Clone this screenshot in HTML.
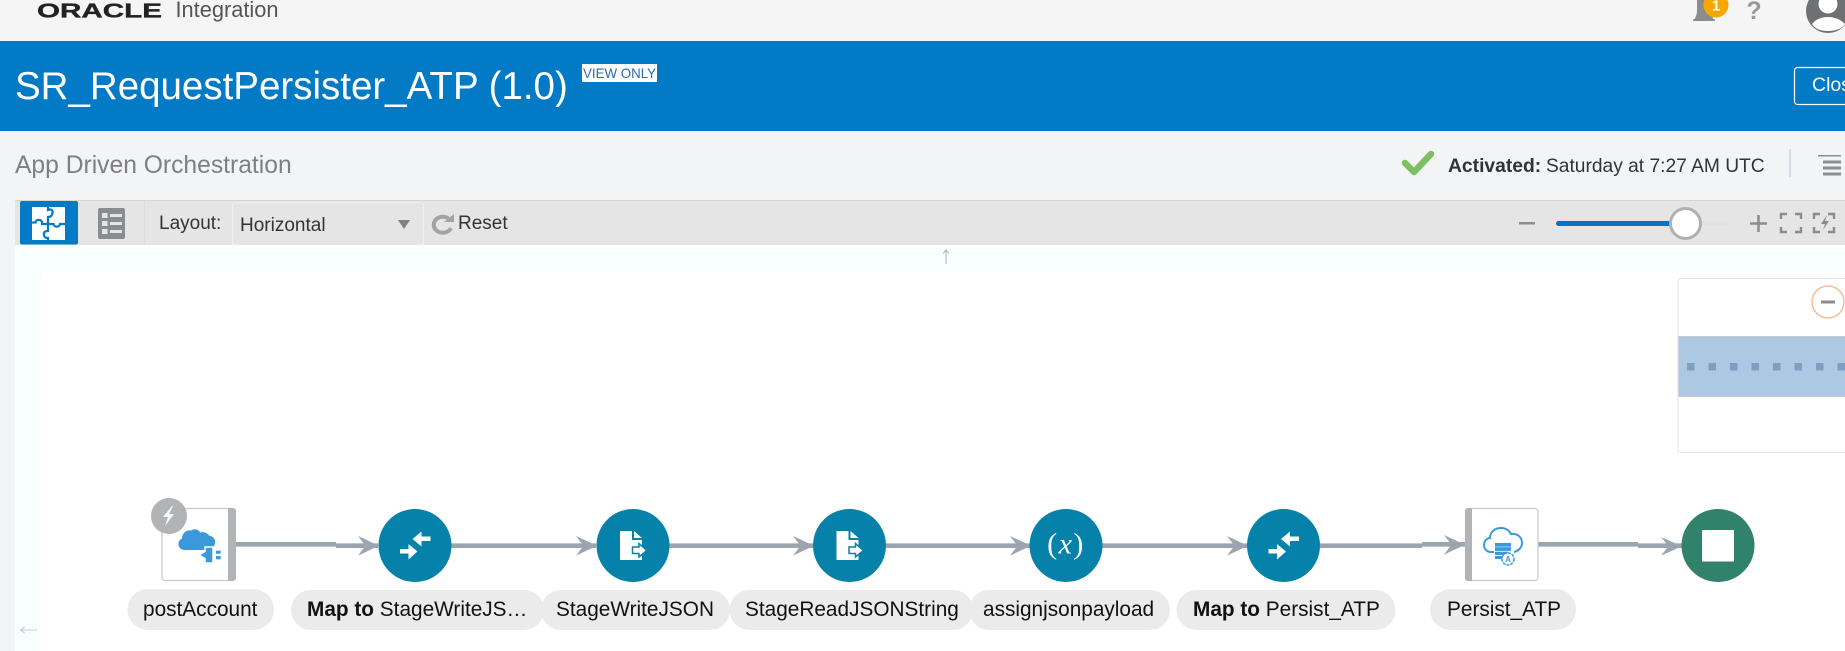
<!DOCTYPE html>
<html lang="en">
<head>
<meta charset="utf-8">
<title>SR_RequestPersister_ATP</title>
<style>
html,body{margin:0;padding:0;width:1845px;height:651px;overflow:hidden;background:#f3f4f6}
svg{display:block;position:absolute;left:0;top:0}
text{font-family:"Liberation Sans",sans-serif}
.lbl{font-size:20.8px;fill:#111}
.pill{fill:#ebebeb}
.ln{stroke:#9aa5b0;stroke-width:4.6;fill:none}
.hd{fill:#9aa5b0}
.c{fill:#0581aa}
.ic{fill:#fff}
</style>
</head>
<body>
<svg width="1845" height="651" viewBox="0 0 1845 651" xmlns="http://www.w3.org/2000/svg">
<!-- backgrounds -->
<rect x="0" y="0" width="1845" height="651" fill="#f3f4f6"/>
<rect x="0" y="0" width="1845" height="41" fill="#f5f5f5"/>
<rect x="0" y="41" width="1845" height="90" fill="#027ac6"/>

<!-- top bar -->
<text x="37" y="17.500" font-size="20" font-weight="700" textLength="125" lengthAdjust="spacingAndGlyphs" fill="#222" stroke="#222" stroke-width=".35">ORACLE</text>
<text x="175.500" y="17" font-size="21.800" fill="#555">Integration</text>

<path d="M1694 20c2-3 3-6 3-10V0h14v10c0 4 1 7 3 10z" fill="#8a8c8e"/>
<rect x="1693" y="19" width="22" height="2" rx="1" fill="#8a8c8e"/>
<circle cx="1716" cy="5" r="12.500" fill="#f7a800"/>
<text x="1716" y="10.500" font-size="15" font-weight="700" fill="#fff" text-anchor="middle">1</text>
<text x="1754" y="19" font-size="25" font-weight="700" fill="#97999b" text-anchor="middle">?</text>
<circle cx="1828" cy="11" r="22" fill="#6f7072"/>
<circle cx="1828" cy="4" r="9.500" fill="#fff"/>
<path d="M1812 24c4-5 10-7 16-7s12 2 17 7c-3 5-10 7-17 7s-13-2-16-7z" fill="#fff"/>

<!-- banner -->
<text x="15" y="99" font-size="38.500" fill="#fff">SR_RequestPersister_ATP (1.0)</text>
<rect x="582" y="64" width="75" height="18" fill="#fff"/>
<text x="583" y="78" font-size="14" fill="#2a6ab0" textLength="73" lengthAdjust="spacingAndGlyphs">VIEW ONLY</text>
<rect x="1794.500" y="67.500" width="70" height="37" rx="3" fill="none" stroke="#fff" stroke-width="1.200"/>
<text x="1812" y="91" font-size="19.500" fill="#fff">Close</text>

<!-- sub header -->
<text x="15" y="173" font-size="24.650" fill="#7f7f7f">App Driven Orchestration</text>
<path d="M1405 163l9 9 17-18" fill="none" stroke="#7fbf63" stroke-width="6.500" stroke-linecap="round" stroke-linejoin="round"/>
<text x="1448" y="172" font-size="19.300" font-weight="700" fill="#333">Activated:</text>
<text x="1546" y="172" font-size="19.200" fill="#333">Saturday at 7:27 AM UTC</text>
<rect x="1789" y="149" width="2" height="28" fill="#d5dce4"/>
<g fill="#8a8c8e">
<rect x="1818" y="155" width="23" height="1.500"/>
<rect x="1823" y="160.500" width="18" height="3"/>
<rect x="1823" y="166.500" width="18" height="3"/>
<rect x="1823" y="172.500" width="18" height="3"/>
</g>

<!-- toolbar -->
<rect x="15" y="200" width="1830" height="45" fill="#e5e5e5"/>
<rect x="15" y="200" width="1830" height="1" fill="#d8d8c8"/>
<rect x="20" y="201" width="58" height="43.500" rx="2" fill="#027ac6"/>
<rect x="32" y="207" width="33" height="33" fill="#fff"/>
<g fill="none" stroke="#027ac6" stroke-width="2.200">
<path d="M32 222.500h3.500c0-3.500 6.500-3.500 6.500 0v1.500h6"/>
<path d="M48 207v3c4-1.500 5 1 4.500 3s-1 4-4.500 4v7"/>
<path d="M48 224h5.500c0 3.500 6.500 3.500 6.500 0h5"/>
<path d="M48 224v7c-4 0-4.500 2-4 4s1 3 4 3v2"/>
</g>
<rect x="98" y="208" width="27" height="31" rx="2" fill="#8a8c8e"/>
<g fill="#e5e5e5">
<rect x="102" y="213" width="5.500" height="5"/><rect x="110" y="214" width="12" height="3"/>
<rect x="102" y="221" width="5.500" height="5"/><rect x="110" y="222" width="12" height="3"/>
<rect x="102" y="229" width="5.500" height="5"/><rect x="110" y="230" width="12" height="3"/>
</g>
<rect x="144" y="201" width="1" height="44" fill="#dcdcdc"/>
<text x="159" y="229" font-size="19" fill="#333">Layout:</text>
<rect x="232.500" y="202.500" width="191" height="43" rx="3" fill="#e5e5e5" stroke="#f0f0f0"/>
<text x="240" y="231" font-size="19" fill="#333">Horizontal</text>
<path d="M398 220h12l-6 9z" fill="#808080"/>
<path d="M449 219a9 8 0 1 0 2 9" fill="none" stroke="#a3a3a3" stroke-width="4"/>
<path d="M444 222h10v-8z" fill="#a3a3a3"/>
<text x="458" y="229" font-size="19" fill="#333">Reset</text>

<!-- zoom controls -->
<rect x="1519" y="222" width="16" height="2.500" fill="#8a8c8e"/>
<rect x="1556" y="221" width="173" height="5" rx="2.500" fill="#e0e2e2"/>
<rect x="1556" y="221" width="128" height="5" rx="2.500" fill="#0572c4"/>
<circle cx="1685.500" cy="223.500" r="15" fill="#fff" stroke="#b0b0b0" stroke-width="3"/>
<path d="M1750 223.500h17M1758.500 215v17" stroke="#8a8c8e" stroke-width="2.500" fill="none"/>
<g fill="none" stroke="#8a8c8e" stroke-width="2.400">
<path d="M1781 219v-5h6M1795 214h6v5M1801 227v5h-6M1787 232h-6v-5"/>
<path d="M1814 219v-5h6M1828 214h6v5M1834 227v5h-6M1820 232h-6v-5"/>
</g>
<path d="M1827 215l-6 9h4l-2 6 6-9h-4z" fill="#8a8c8e"/>

<!-- canvas -->
<rect x="15" y="245" width="1830" height="406" fill="#fff"/>
<rect x="15" y="245" width="1830" height="28" fill="#f8fffe"/>
<rect x="15" y="245" width="27" height="406" fill="#f8fffe"/>
<path d="M946 264v-13M943 253.500l3-3.500 3 3.500" fill="none" stroke="#b4b9bc" stroke-width="1.100"/>
<path d="M37 630H21M24.500 627L20.500 630l4 3" fill="none" stroke="#c8cbcd" stroke-width="1.100"/>

<!-- minimap -->
<rect x="1678" y="278.500" width="180" height="174" rx="3" fill="#fff" stroke="#e2e4e6"/>
<rect x="1678.500" y="336" width="170" height="61" fill="#adc8e3"/>
<rect x="1678.500" y="336" width="170" height="1" fill="#c8ccd0"/>
<rect x="1678.500" y="396" width="170" height="1" fill="#c8ccd0"/>
<g fill="#7f9fc2">
<rect x="1687" y="363" width="7.500" height="7.500"/>
<rect x="1708.500" y="363" width="7.500" height="7.500"/>
<rect x="1730" y="363" width="7.500" height="7.500"/>
<rect x="1751.500" y="363" width="7.500" height="7.500"/>
<rect x="1773" y="363" width="7.500" height="7.500"/>
<rect x="1794.500" y="363" width="7.500" height="7.500"/>
<rect x="1816" y="363" width="7.500" height="7.500"/>
<rect x="1837.500" y="363" width="7.500" height="7.500"/>
</g>
<circle cx="1828" cy="302" r="16" fill="#fff" stroke="#f5b082" stroke-width="1.200"/>
<rect x="1821" y="300.500" width="14" height="3" fill="#8a8c8e"/>

<!-- connectors -->
<path class="ln" d="M236 544.300H336"/>
<path class="ln" d="M336 545.700H378"/>
<path class="hd" d="M358 536l21 9.800-21 9.800 7.500-9.800z"/>
<path class="ln" d="M451 545.700H596"/>
<path class="hd" d="M576 536l21 9.800-21 9.800 7.500-9.800z"/>
<path class="ln" d="M669 545.700H813"/>
<path class="hd" d="M793 536l21 9.800-21 9.800 7.500-9.800z"/>
<path class="ln" d="M886 545.700H1030"/>
<path class="hd" d="M1010 536l21 9.800-21 9.800 7.500-9.800z"/>
<path class="ln" d="M1102 545.700H1247"/>
<path class="hd" d="M1227 536l21 9.800-21 9.800 7.500-9.800z"/>
<path class="ln" d="M1320 545.700H1422"/>
<path class="ln" d="M1422 544.300H1465"/>
<path class="hd" d="M1444 535l21 9.800-21 9.800 7.500-9.800z"/>
<path class="ln" d="M1538 544.300H1638"/>
<path class="ln" d="M1638 545.700H1682"/>
<path class="hd" d="M1661 537l21 9.300-21 9.300 7.500-9.300z"/>

<!-- trigger node -->
<rect x="162" y="508.500" width="73" height="72" rx="3" fill="#fff" stroke="#c8c9ca" stroke-width="1.200"/>
<path d="M228 508h5a3 3 0 0 1 3 3v67a3 3 0 0 1-3 3h-5z" fill="#b2b3b5"/>
<circle cx="169" cy="516" r="18" fill="#b2b3b5"/>
<path d="M172 506l-9 11h5l-3 9 9-12h-5l4-8z" fill="#fff" fill-opacity=".9"/>
<path d="M184 550a6 6 0 0 1-2-11.500c0-5 4-9 9-8 3-2.500 8-1 9 2 3-1 7 0 9 3 4 .5 7 4 6 8-1 4-4 6.500-8 6.500z" fill="#3b99d9"/>
<path d="M199 555l6-3.500v-4.500h8v16h-8v-4.500z" fill="#3b99d9" stroke="#fff" stroke-width="1.500"/>
<rect x="216" y="550.700" width="4.700" height="3" fill="#3b99d9"/>
<rect x="216" y="556" width="4.700" height="3.300" fill="#3b99d9"/>

<!-- map circle 1 -->
<circle class="c" cx="415" cy="545.500" r="36.500"/>
<g transform="translate(415 545.500)"><path class="ic" d="M-2.500-6.500L6.500-14v5h9v4.500h-9V1zM-15 3.500h8.500v-5L2.500 6l-9 8V8H-15z"/></g>

<!-- doc circle 1 -->
<circle class="c" cx="633" cy="545.500" r="36.500"/>
<g transform="translate(633 545.500)">
<path class="ic" d="M-13-14.500H-1v9h10v20h-22z"/>
<path class="ic" d="M1-14.500L9-7.500H1z"/>
<path d="M-.5 1.500H6V-2l8 7-8 6.500V8H-.5z" fill="#fff" stroke="#0581aa" stroke-width="1.500"/>
</g>

<!-- doc circle 2 -->
<circle class="c" cx="849.500" cy="545.500" r="36.500"/>
<g transform="translate(849.500 545.500)">
<path class="ic" d="M-13-14.500H-1v9h10v20h-22z"/>
<path class="ic" d="M1-14.500L9-7.500H1z"/>
<path d="M-.5 1.500H6V-2l8 7-8 6.500V8H-.5z" fill="#fff" stroke="#0581aa" stroke-width="1.500"/>
</g>

<!-- assign circle -->
<circle class="c" cx="1066" cy="545.500" r="36.500"/>
<text x="1066" y="553.500" font-size="30" letter-spacing="1.500" fill="#fff" text-anchor="middle" style="font-family:'Liberation Serif',serif">(<tspan font-style="italic">x</tspan>)</text>

<!-- map circle 2 -->
<circle class="c" cx="1283.500" cy="545.500" r="36.500"/>
<g transform="translate(1283.500 545.500)"><path class="ic" d="M-2.500-6.500L6.500-14v5h9v4.500h-9V1zM-15 3.500h8.500v-5L2.500 6l-9 8V8H-15z"/></g>

<!-- persist node -->
<rect x="1465.500" y="508.500" width="72.500" height="72" rx="3" fill="#fff" stroke="#c8c9ca" stroke-width="1.200"/>
<path d="M1472 508h-4a3 3 0 0 0-3 3v67a3 3 0 0 0 3 3h4z" fill="#b2b3b5"/>
<path d="M1494 552h-3c-4 0-7-3-7-7s3-7 6-7c0-6 5-10 11-10 4 0 8 2 10 6 6-1 11 3 11 9 0 5-4 8-8 9" fill="none" stroke="#3b99d9" stroke-width="2"/>
<g fill="#3b99d9">
<rect x="1495" y="543" width="16" height="3.700"/>
<rect x="1495" y="547.200" width="16" height="3.700"/>
<rect x="1495" y="551.700" width="13" height="3.300"/>
<rect x="1495" y="556" width="7" height="3"/>
</g>
<circle cx="1508" cy="559" r="6" fill="#fff" stroke="#3b99d9" stroke-width="1.500" stroke-dasharray="3 1"/>
<text x="1508" y="562" font-size="8" font-weight="700" fill="#3b99d9" text-anchor="middle">A</text>

<!-- end circle -->
<circle cx="1718" cy="545.500" r="36.500" fill="#30836a"/>
<rect x="1702" y="530" width="32" height="31.500" fill="#fff"/>

<!-- labels -->
<rect class="pill" x="127.500" y="589" width="146.500" height="41" rx="20.500"/>
<rect class="pill" x="291" y="590" width="253" height="40" rx="20"/>
<rect class="pill" x="541" y="590" width="189" height="40" rx="20"/>
<rect class="pill" x="729.500" y="590" width="243.500" height="40" rx="20"/>
<rect class="pill" x="969" y="590" width="201" height="40" rx="20"/>
<rect class="pill" x="1176.500" y="590" width="219" height="40" rx="20"/>
<rect class="pill" x="1430" y="589" width="146" height="41" rx="20.500"/>
<text class="lbl" x="143" y="616">postAccount</text>
<text class="lbl" x="307" y="616"><tspan font-weight="700">Map to</tspan> StageWriteJS…</text>
<text class="lbl" x="556" y="616">StageWriteJSON</text>
<text class="lbl" x="745" y="616">StageReadJSONString</text>
<text class="lbl" x="983" y="616">assignjsonpayload</text>
<text class="lbl" x="1193" y="616"><tspan font-weight="700">Map to</tspan> Persist_ATP</text>
<text class="lbl" x="1447" y="616">Persist_ATP</text>
</svg>
</body>
</html>
